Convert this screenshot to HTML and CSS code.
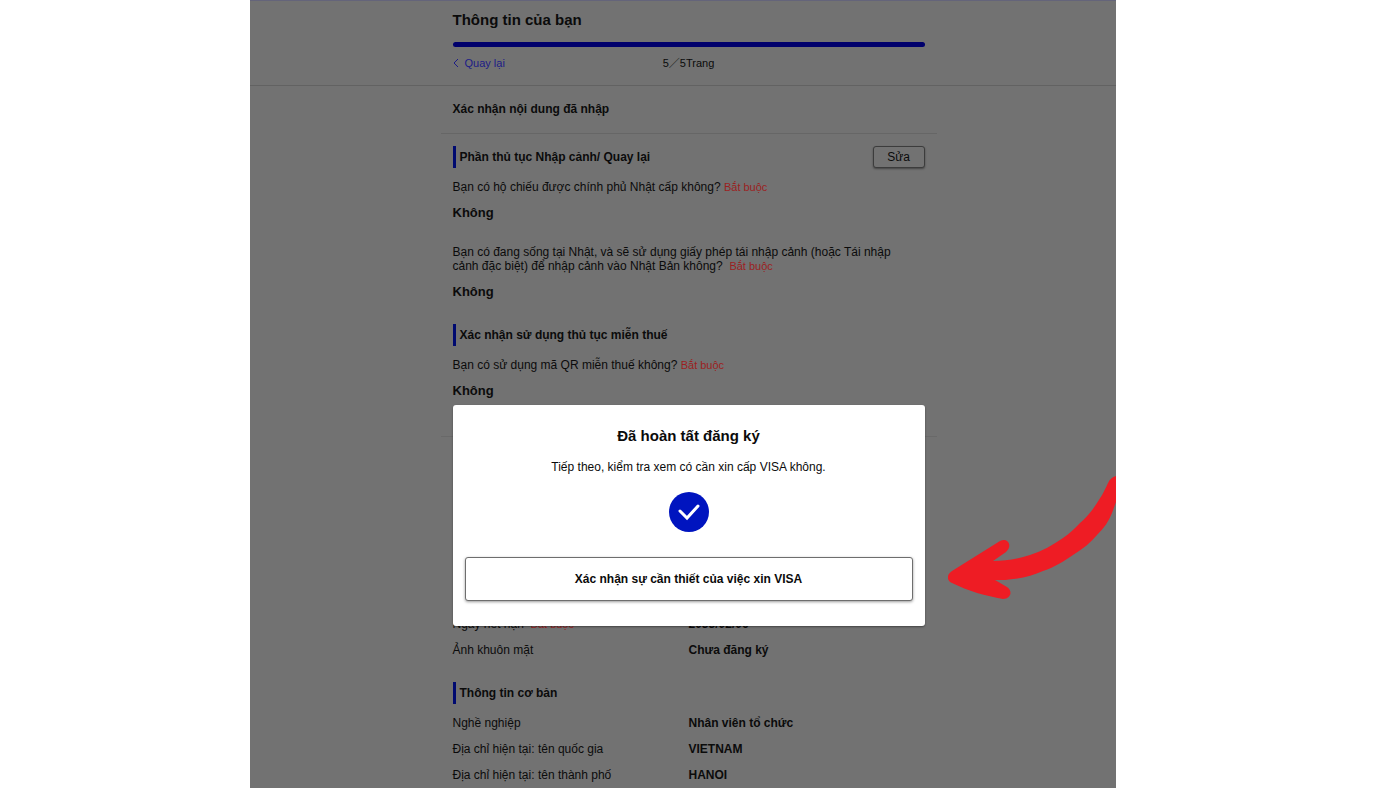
FILE: index.html
```
<!DOCTYPE html>
<html lang="vi">

<head>
    <meta charset="UTF-8">
    <meta name="viewport" content="width=device-width, initial-scale=1.0">
    <title>Thông tin của bạn</title>
    <link rel="stylesheet" href="styles.css">
</head>

<body>
    <div class="screen">
        <header class="page-header">
            <div class="column">
                <h1>Thông tin của bạn</h1>
                <div class="progress"></div>
                <nav class="step-nav">
                    <a class="back" href="#">
                        <svg width="6" height="10" viewBox="0 0 6 10" aria-hidden="true">
                            <path d="M5 1 L1 5 L5 9" />
                        </svg>
                        Quay lại
                    </a>
                    <span class="step">5／5Trang</span>
                </nav>
            </div>
        </header>

        <main class="content">
            <h2>Xác nhận nội dung đã nhập</h2>

            <section class="group">
                <div class="group-head">
                    <h3>Phần thủ tục Nhập cảnh/ Quay lại</h3>
                    <button class="edit" type="button">Sửa</button>
                </div>
                <p class="question">Bạn có hộ chiếu được chính phủ Nhật cấp không? <span class="required">Bắt buộc</span></p>
                <p class="answer">Không</p>
                <p class="question next">Bạn có đang sống tại Nhật, và sẽ sử dụng giấy phép tái nhập cảnh (hoặc Tái nhập cảnh đặc biệt) để nhập cảnh vào Nhật Bản không? &nbsp;<span class="required">Bắt buộc</span></p>
                <p class="answer">Không</p>

                <div class="group-head next-head">
                    <h3>Xác nhận sử dụng thủ tục miễn thuế</h3>
                </div>
                <p class="question">Bạn có sử dụng mã QR miễn thuế không? <span class="required">Bắt buộc</span></p>
                <p class="answer">Không</p>
            </section>

            <section class="group passport">
                <dl class="rows">
                    <dt>Ngày hết hạn &nbsp;<span class="required">Bắt buộc</span></dt>
                    <dd>2033/02/06</dd>
                    <dt>Ảnh khuôn mặt</dt>
                    <dd>Chưa đăng ký</dd>
                </dl>
                <div class="group-head next-head">
                    <h3>Thông tin cơ bản</h3>
                </div>
                <dl class="rows">
                    <dt>Nghề nghiệp</dt>
                    <dd>Nhân viên tổ chức</dd>
                    <dt>Địa chỉ hiện tại: tên quốc gia</dt>
                    <dd>VIETNAM</dd>
                    <dt>Địa chỉ hiện tại: tên thành phố</dt>
                    <dd>HANOI</dd>
                </dl>
            </section>
        </main>

        <div class="modal-layer">
            <div class="modal" role="dialog" aria-labelledby="modalTitle">
                <h2 id="modalTitle">Đã hoàn tất đăng ký</h2>
                <p>Tiếp theo, kiểm tra xem có cần xin cấp VISA không.</p>
                <svg class="check" width="40" height="40" viewBox="0 0 40 40" aria-hidden="true">
                    <circle cx="20" cy="20" r="20" />
                    <path d="M11 19 L18 26 L29 14" />
                </svg>
                <button class="confirm" type="button">Xác nhận sự cần thiết của việc xin VISA</button>
            </div>
        </div>

        <svg class="arrow" width="168" height="128" viewBox="0 0 168 128" aria-hidden="true">
            <path d="M168 1 C164 2 162 4 160 8 C156 17 153 22 149 28 C144 36 139 42 132 48 C127 53 121 59 115 63 C105 70 94 76 82 80 C70 84 57 86 45 86 L58 77 C65 71 60 62 52 66 L4 96 C-2 100 -1 106 4 108 C20 116 38 121 55 124 C63 124 65 116 59 112 L47 105 C55 105 60 105 65 104 C76 103 86 100 95 96 C107 92 116 86 125 80 C135 74 143 67 149 60 C156 53 161 46 164 38 L168 27 Z" />
        </svg>
    </div>
</body>

</html>
```
FILE: styles.css
```
* {
    box-sizing: border-box;
}

body {
    margin: 0;
    background-color: #fff;
    color: #0b0b0b;
    font-family: "Liberation Sans", Arial, "Noto Sans CJK JP", sans-serif;
    font-size: 13px;
    line-height: 14px;
}

h1, h2, h3, p, dl, dd {
    margin: 0;
}

.screen {
    position: relative;
    height: 100vh;
    margin: 0 284px 0 250px;
    overflow: hidden;
    background-color: #727272;
    border-top: 1px solid #64647a;
}

/* header */
.page-header {
    padding: 9px 0 14px 11px;
    border-bottom: 1px solid #626262;
}

.column {
    max-width: 472px;
    margin: 0 auto;
}

h1 {
    font-size: 15px;
    line-height: 20px;
}

.progress {
    height: 5px;
    margin-top: 12px;
    border-radius: 3px;
    background-color: #00006c;
}

.step-nav {
    display: grid;
    grid-template-columns: 1fr auto 1fr;
    margin-top: 8px;
    font-size: 11px;
    line-height: 16px;
}

.back {
    display: flex;
    align-items: center;
    gap: 6px;
    color: #1c1c86;
    text-decoration: none;
}

.back svg {
    fill: none;
    stroke: #1c1c86;
}

/* content */
.content {
    padding-left: 11px;
}

.content > h2 {
    max-width: 496px;
    margin: 0 auto;
    padding: 16px 12px;
    border-bottom: 1px solid #666;
    font-size: 12px;
    line-height: 15px;
}

.group {
    max-width: 496px;
    margin: 0 auto;
    padding: 12px 12px 0;
}

.group-head {
    display: flex;
    justify-content: space-between;
    align-items: center;
    height: 22px;
    margin-bottom: 12px;
}

.next-head {
    margin-top: 25px;
}

h3 {
    padding-left: 4px;
    border-left: 3px solid #000a70;
    font-size: 12px;
    line-height: 22px;
}

.edit {
    width: 52px;
    height: 22px;
    padding: 0;
    border: 1px solid #3c3c3c;
    border-radius: 3px;
    background-color: #727272;
    box-shadow: 0 1px 2px rgba(0, 0, 0, 0.4);
    color: #0b0b0b;
    font: inherit;
    font-size: 12px;
}

.question {
    padding-right: 12px;
    font-size: 12px;
}

.next {
    margin-top: 25px;
}

.answer {
    margin-top: 12px;
    font-size: 13px;
    font-weight: bold;
}

.required {
    color: #9c1f1f;
    font-size: 11px;
}

.passport {
    margin-top: 38px;
    padding-top: 180px;
    border-top: 1px solid #696969;
}

.rows {
    display: grid;
    grid-template-columns: 1fr 1fr;
    row-gap: 12px;
    font-size: 12px;
}

.rows dd {
    font-weight: bold;
}

/* modal */
.modal-layer {
    position: absolute;
    top: 404px;
    left: 11px;
    right: 0;
    display: flex;
    justify-content: center;
}

.modal {
    display: flex;
    flex-direction: column;
    align-items: center;
    width: 472px;
    padding: 21px 12px 25px;
    border-radius: 3px;
    background-color: #fff;
    box-shadow: 0 1px 2px rgba(0, 0, 0, 0.4);
}

.modal h2 {
    font-size: 15px;
    line-height: 20px;
}

.modal p {
    margin-top: 14px;
    font-size: 12px;
}

.check {
    margin: 18px 0 25px;
}

.check circle {
    fill: #0014bf;
}

.check path {
    fill: none;
    stroke: #fff;
    stroke-width: 3;
    stroke-linecap: round;
}

.confirm {
    width: 100%;
    height: 44px;
    border: 1px solid #6e6e6e;
    border-radius: 3px;
    background-color: #fff;
    box-shadow: 0 1px 3px rgba(0, 0, 0, 0.4);
    color: #0b0b0b;
    font: inherit;
    font-size: 12px;
    font-weight: bold;
}

.arrow {
    position: absolute;
    top: 474px;
    right: 0;
    fill: #ee1c24;
}
```
